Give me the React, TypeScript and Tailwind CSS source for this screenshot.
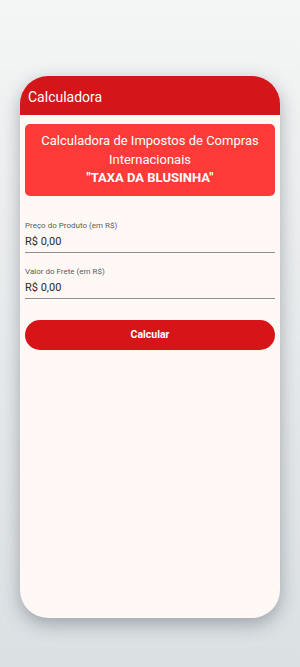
// Calculadora — "Taxa da Blusinha" import tax calculator, shown inside a phone frame.

function Field({ label, value }: { label: string; value: string }) {
  return (
    <div className="flex flex-col border-b border-[#8f8f8f] pb-[3px]">
      <span className="text-[8px] leading-[10px] text-[#5c5c5c]">{label}</span>
      <span className="mt-[4px] text-[11px] leading-[14px] text-[#2a2a2a]">{value}</span>
    </div>
  );
}

export default function App() {
  return (
    <div
      className="flex h-[667px] w-[300px] flex-col bg-gradient-to-b from-[#f4f5f5] to-[#dbe0e3] px-5 pt-[76px]"
      style={{ fontFamily: 'Roboto, "Liberation Sans", sans-serif' }}
    >
      <div className="flex h-[542px] w-[260px] flex-col overflow-hidden rounded-[28px] bg-[#fff8f5] shadow-[0_6px_18px_rgba(60,70,80,0.4)]">
        <header className="flex h-[39px] items-center bg-[#d41519] px-[8px] pt-[4px]">
          <h1 className="text-[14px] font-normal text-white">Calculadora</h1>
        </header>

        <main className="flex flex-col px-[5px] pt-[9px]">
          <div className="flex flex-col items-center rounded-[5px] bg-[#ff3b3a] px-2 pt-[8px] pb-[8px] text-center text-[13px] leading-[18.5px] text-white">
            <span>Calculadora de Impostos de Compras</span>
            <span>Internacionais</span>
            <span className="font-bold">"TAXA DA BLUSINHA"</span>
          </div>

          <div className="mt-[25px] flex flex-col gap-[14px]">
            <Field label="Preço do Produto (em R$)" value="R$ 0,00" />
            <Field label="Valor do Frete (em R$)" value="R$ 0,00" />
          </div>

          <button
            type="button"
            className="mt-[21px] flex h-[30px] items-center justify-center rounded-full bg-[#d71519] text-[10.5px] font-bold text-white"
          >
            Calcular
          </button>
        </main>
      </div>
    </div>
  );
}
